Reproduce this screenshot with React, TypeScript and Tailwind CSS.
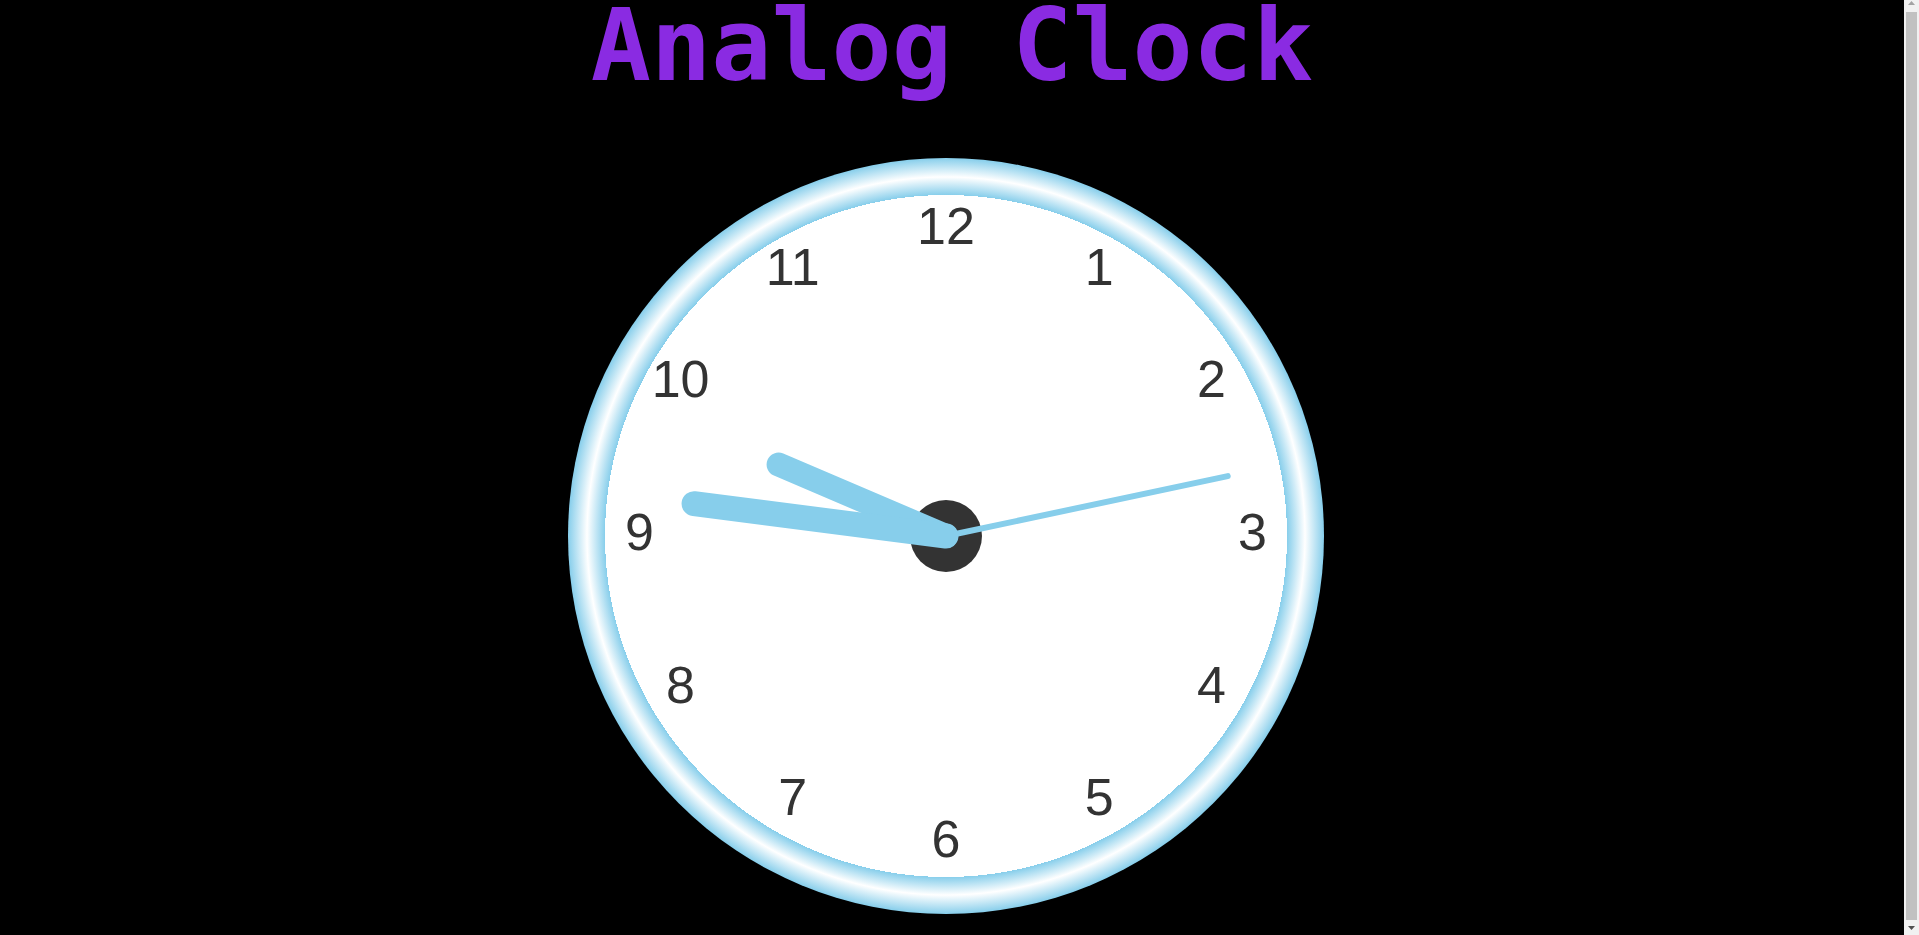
const NUMBERS = [12, 1, 2, 3, 4, 5, 6, 7, 8, 9, 10, 11];

// the time shown: 9:46:13
const HOURS = 9;
const MINUTES = 46;
const SECONDS = 13;

const C = 378; // clock radius / centre in its own box

function point(angle: number, length: number, cy = C) {
  const rad = (angle * Math.PI) / 180;
  return { x: C + length * Math.sin(rad), y: cy - length * Math.cos(rad) };
}

function Hand({ angle, length, width }: { angle: number; length: number; width: number }) {
  const end = point(angle, length);
  return (
    <line
      x1={C}
      y1={C}
      x2={end.x}
      y2={end.y}
      stroke="#87ceeb"
      strokeWidth={width}
      strokeLinecap="round"
    />
  );
}

function Scrollbar() {
  return (
    <div className="flex w-[15px] shrink-0 flex-col bg-[#f1f1f1]">
      <div className="flex h-[12px] items-start justify-center">
        <svg width="9" height="6" viewBox="0 0 9 6">
          <polygon points="4.5,1 8,5 1,5" fill="#a3a3a3" />
        </svg>
      </div>
      <div className="mx-[2px] flex-1 bg-[#c1c1c1]" />
      <div className="flex h-[15px] items-center justify-center">
        <svg width="9" height="6" viewBox="0 0 9 6">
          <polygon points="1,1 8,1 4.5,5" fill="#505050" />
        </svg>
      </div>
    </div>
  );
}

export default function App() {
  const secondAngle = SECONDS * 6;
  const minuteAngle = MINUTES * 6 + SECONDS * 0.1;
  const hourAngle = (HOURS % 12) * 30 + MINUTES * 0.5 + SECONDS / 120;

  return (
    <div className="flex h-screen overflow-hidden bg-black">
      <div className="flex flex-1 flex-col items-center">
        <h1 className="-mt-[4px] font-['DejaVu_Sans_Mono',monospace] text-[100px] font-bold leading-none text-[#8a2be2]">
          Analog Clock
        </h1>

        <div className="relative mt-[62px] mr-3 h-[756px] w-[756px] shrink-0 rounded-full bg-[radial-gradient(circle,#ffffff_341px,#87ceeb_341px,#ffffff_359px,#87ceeb_378px)]">
          {NUMBERS.map((n, i) => {
            const p = point(i * 30, 306.5, 374);
            return (
              <span
                key={n}
                className="absolute -translate-x-1/2 -translate-y-1/2 font-['Liberation_Sans',Arial,sans-serif] text-[52px] leading-none text-[#333333]"
                style={{ left: p.x, top: p.y }}
              >
                {n}
              </span>
            );
          })}

          <svg className="absolute inset-0" width={756} height={756} viewBox="0 0 756 756">
            <circle cx={C} cy={C} r={36} fill="#333333" />
            <Hand angle={secondAngle} length={288} width={6} />
            <Hand angle={hourAngle} length={182} width={24} />
            <Hand angle={minuteAngle} length={254} width={25} />
          </svg>
        </div>
      </div>
      <Scrollbar />
    </div>
  );
}
